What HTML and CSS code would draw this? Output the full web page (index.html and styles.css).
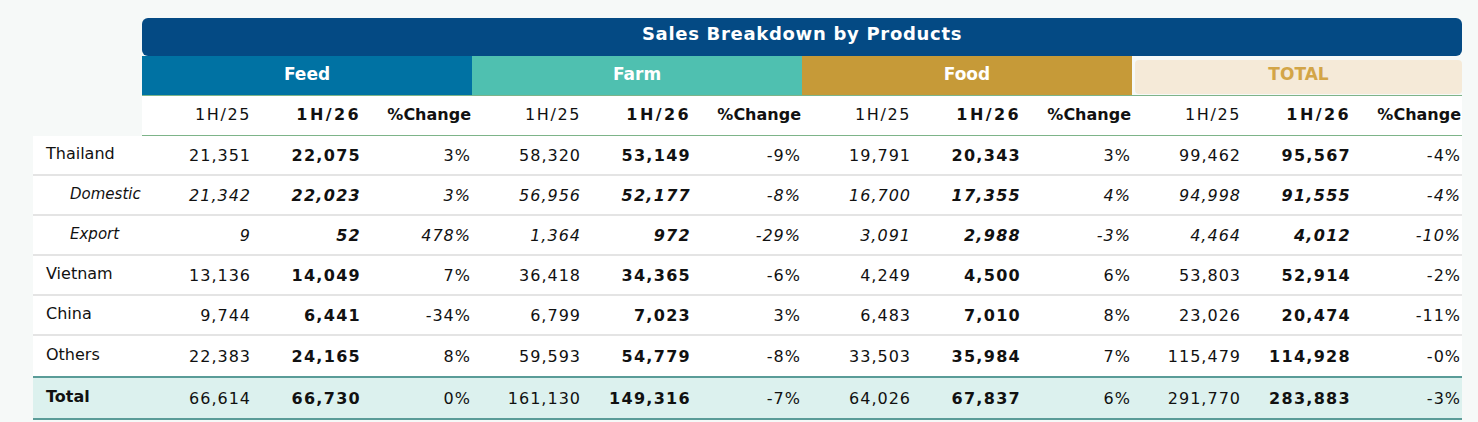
FILE: index.html
```html
<!DOCTYPE html>
<html lang="en">
<head>
  <meta charset="UTF-8" />
  <title>Sales Breakdown by Products</title>
  <link rel="stylesheet" href="styles.css">
</head>
<body>

  <table class="sales">
    <colgroup>
      <col class="label-col">
      <col span="12" class="num-col">
    </colgroup>
    <thead>
      <tr class="title-row">
        <th class="blank"></th>
        <th colspan="12"><div class="title">Sales Breakdown by Products</div></th>
      </tr>
      <tr class="group-row">
        <th class="blank"></th>
        <th colspan="3" class="feed">Feed</th>
        <th colspan="3" class="farm">Farm</th>
        <th colspan="3" class="food">Food</th>
        <th colspan="3" class="total-head"><div class="total-box">TOTAL</div></th>
      </tr>
      <tr class="period-row">
        <th class="blank"></th>
        <th>1H/25</th><th class="cur">1H/26</th><th class="chg">%Change</th>
        <th>1H/25</th><th class="cur">1H/26</th><th class="chg">%Change</th>
        <th>1H/25</th><th class="cur">1H/26</th><th class="chg">%Change</th>
        <th>1H/25</th><th class="cur">1H/26</th><th class="chg">%Change</th>
      </tr>
    </thead>
    <tbody id="rows">
      <!-- rows are filled in below -->
    </tbody>
  </table>

  <script>
    // label, style, then [1H/25, 1H/26, %change] for Feed, Farm, Food, Total
    const data = [
      ["Thailand", "", ["21,351","22,075","3%"], ["58,320","53,149","-9%"], ["19,791","20,343","3%"], ["99,462","95,567","-4%"]],
      ["Domestic", "sub", ["21,342","22,023","3%"], ["56,956","52,177","-8%"], ["16,700","17,355","4%"], ["94,998","91,555","-4%"]],
      ["Export", "sub", ["9","52","478%"], ["1,364","972","-29%"], ["3,091","2,988","-3%"], ["4,464","4,012","-10%"]],
      ["Vietnam", "", ["13,136","14,049","7%"], ["36,418","34,365","-6%"], ["4,249","4,500","6%"], ["53,803","52,914","-2%"]],
      ["China", "", ["9,744","6,441","-34%"], ["6,799","7,023","3%"], ["6,483","7,010","8%"], ["23,026","20,474","-11%"]],
      ["Others", "last", ["22,383","24,165","8%"], ["59,593","54,779","-8%"], ["33,503","35,984","7%"], ["115,479","114,928","-0%"]],
      ["Total", "grand", ["66,614","66,730","0%"], ["161,130","149,316","-7%"], ["64,026","67,837","6%"], ["291,770","283,883","-3%"]]
    ];

    const body = document.getElementById("rows");

    data.forEach(row => {
      const tr = document.createElement("tr");
      if (row[1]) tr.className = row[1];
      let html = `<td class="name">${row[0]}</td>`;
      row.slice(2).forEach(group => {
        html += `<td>${group[0]}</td><td class="cur">${group[1]}</td><td class="chg">${group[2]}</td>`;
      });
      tr.innerHTML = html;
      body.appendChild(tr);
    });
  </script>

</body>
</html>
```

FILE: styles.css
```css
body {
  font-family: "DejaVu Sans", Verdana, sans-serif;
  background: #f6f9f8;
  color: #111;
  margin: 0;
  padding: 18px 0 0 33px;
}

.sales {
  border-collapse: separate;
  border-spacing: 0;
  table-layout: fixed;
  width: 1429px;
}

.label-col {
  width: 109px;
}

.num-col {
  width: 110px;
}

.sales th,
.sales td {
  padding: 0 1px 0 0;
  text-align: right;
  white-space: nowrap;
}

.blank {
  background: transparent;
}

/* title bar */
.title-row th {
  height: 38px;
  padding: 0;
}

.title {
  background: #044a84;
  color: #fff;
  height: 38px;
  line-height: 31px;
  border-radius: 6px;
  text-align: center;
  font-size: 18px;
  font-weight: bold;
  letter-spacing: 0.7px;
}

/* product groups */
.group-row th {
  height: 36px;
  padding: 0 0 3px 0;
  text-align: center;
  color: #fff;
  font-size: 17px;
  font-weight: bold;
  border-bottom: 1px solid #7db489;
}

.group-row th.blank {
  border-bottom: none;
}

.feed {
  background: #0072a3;
}

.farm {
  background: #4fc0b0;
}

.food {
  background: #c69a38;
}

.sales .total-head {
  background: transparent;
  vertical-align: bottom;
  padding: 0;
}

.total-box {
  background: #f5ead8;
  color: #d3a547;
  height: 34px;
  line-height: 28px;
  margin: 0 0 1px 3px;
  border-radius: 4px;
}

/* period headers */
.period-row th {
  height: 36px;
  padding-bottom: 3px;
  background: #fff;
  font-size: 16px;
  font-weight: normal;
  letter-spacing: 1.6px;
  border-bottom: 1px solid #7db489;
}

.period-row th.cur {
  font-weight: bold;
  letter-spacing: 2.4px;
}

.period-row th.chg {
  font-weight: bold;
  letter-spacing: 0;
}

.period-row th.blank {
  background: transparent;
  border-bottom: none;
}

/* data rows */
.sales td {
  height: 38px;
  background: #fff;
  font-size: 16px;
  letter-spacing: 1px;
  border-bottom: 2px solid #e4e4e4;
}

.sales td.cur {
  font-weight: bold;
  letter-spacing: 1.3px;
}

.sales td.name {
  height: 35px;
  text-align: left;
  padding: 0 0 3px 13px;
  letter-spacing: 0;
}

.sub td {
  font-style: italic;
}

.sales .sub td.name {
  padding-left: 37px;
  font-size: 15px;
}

.last td {
  height: 40px;
  border-bottom: 2px solid #5a9c98;
}

.sales .last td.name {
  height: 37px;
}

.grand td {
  height: 40px;
  background: #dcf1ee;
  border-bottom: 2px solid #5a9c98;
}

.sales .grand td.name {
  height: 37px;
  font-weight: bold;
}
```
